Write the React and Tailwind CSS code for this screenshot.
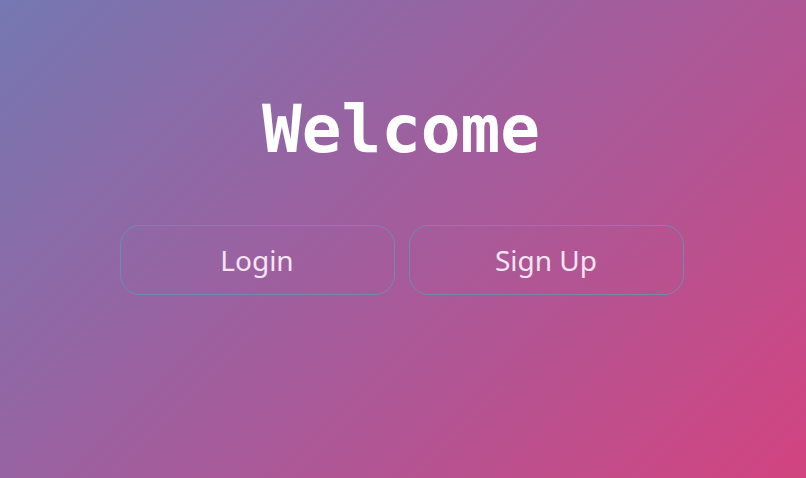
export default function App() {
  return (
    <div className="flex h-[478px] w-[806px] flex-col items-center bg-[linear-gradient(135deg,#7478b2_0%,#a45c9c_50%,#d24480_100%)] pt-[97px]">
      <h1 className="pr-[4px] text-[66px] font-bold leading-none text-white [font-family:'DejaVu_Sans_Mono',monospace]">
        Welcome
      </h1>
      <div className="mt-[62px] flex gap-[14px] pr-[3px]">
        {["Login", "Sign Up"].map((label) => (
          <button
            key={label}
            className="flex h-[70px] w-[275px] items-center justify-center rounded-[20px] border border-[#6d8bb0] text-[28px] font-normal text-[#f6e4f2] [font-family:'Noto_Sans',sans-serif]"
          >
            {label}
          </button>
        ))}
      </div>
    </div>
  );
}
